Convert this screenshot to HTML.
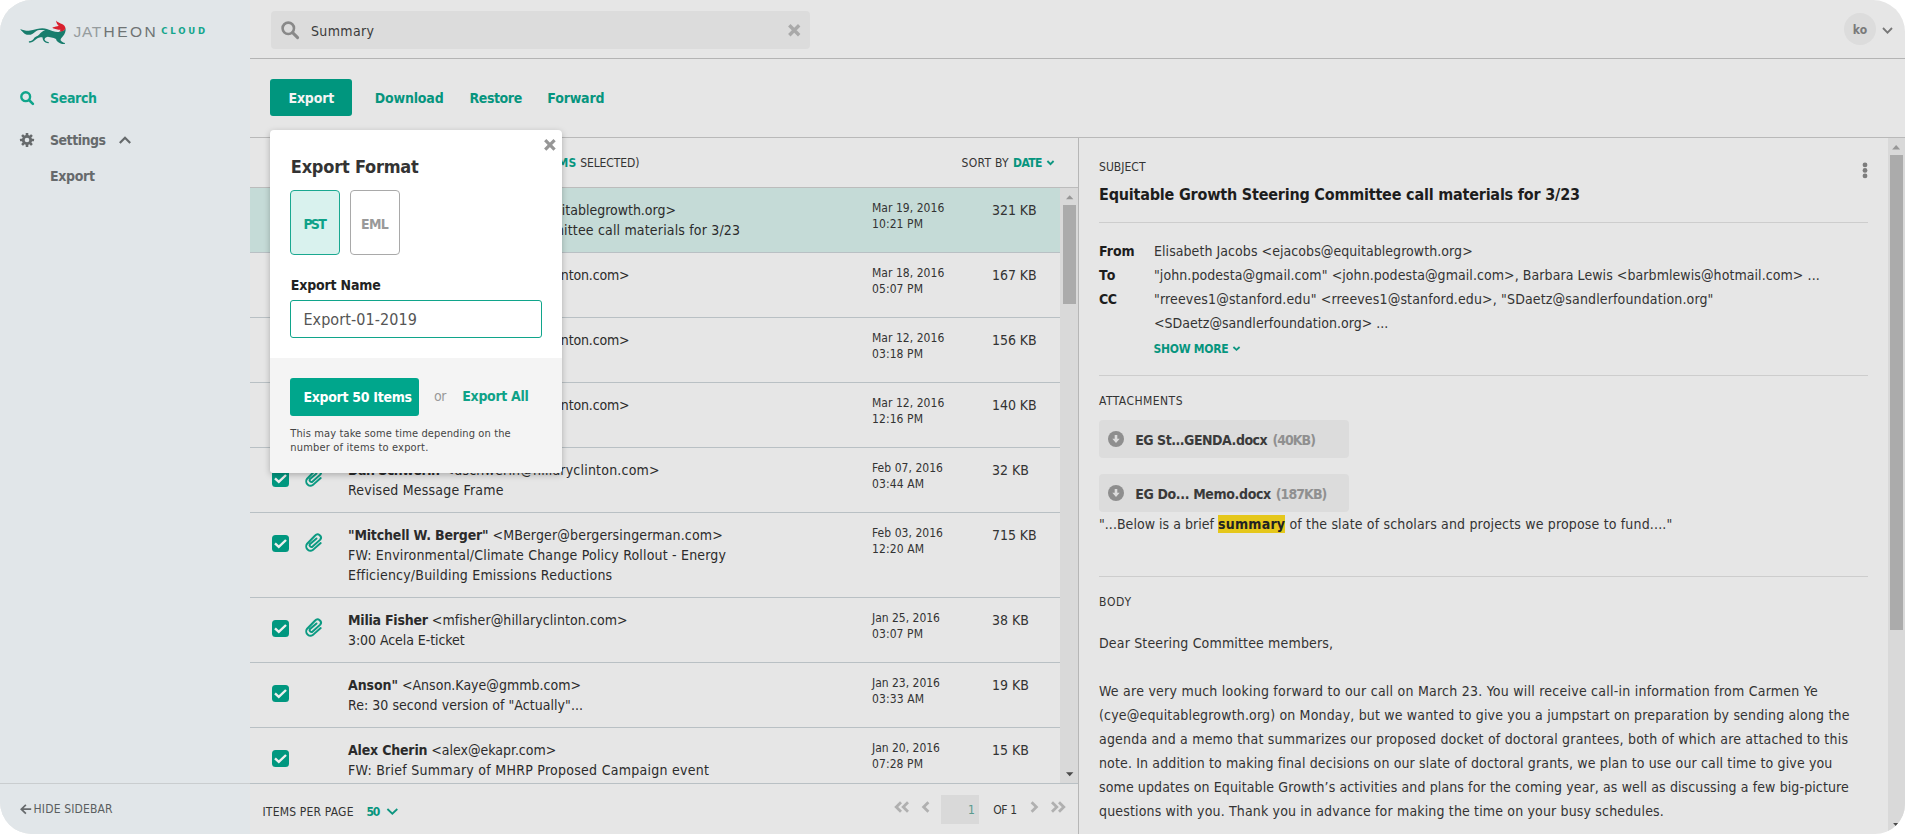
<!DOCTYPE html>
<html lang="en">
<head>
<meta charset="utf-8">
<title>Jatheon Cloud</title>
<style>
*{box-sizing:border-box;margin:0;padding:0}
html,body{width:1905px;height:834px;overflow:hidden;background:#fff}
body{font-family:"DejaVu Sans Condensed","Liberation Sans",sans-serif;font-size:14px;color:#2b2b2b;-webkit-font-smoothing:antialiased}
#app{position:absolute;left:0;top:0;width:1905px;height:834px;border-radius:32px 32px 30px 32px;overflow:hidden;background:#e6e6e6}
.abs{position:absolute}
.t{position:absolute;white-space:nowrap;line-height:20px}
b,.b{font-weight:bold}

svg{position:absolute;overflow:visible}
/* sidebar */
#sidebar{position:absolute;left:0;top:0;width:250px;height:834px;background:#e1e6e9}
#sbfoot{position:absolute;left:0;top:783px;width:250px;height:1px;background:#c9cdcf}
/* header */
#hline{position:absolute;left:250px;top:58px;width:1655px;height:1px;background:#b4b4b4}
#search{position:absolute;left:271px;top:11px;width:539px;height:38px;background:#dcdcdc;border-radius:4px}
#tline{position:absolute;left:250px;top:137px;width:1655px;height:1px;background:#b9b9b9}
#exportbtn{position:absolute;left:270px;top:79px;width:82px;height:37px;background:#00967e;border-radius:3px}

/* nav */
.nav{position:absolute;left:50px;white-space:nowrap;font-weight:bold;line-height:20px;font-size:14px}
#logo1{position:absolute;left:74.5px;top:22px;font-size:15.5px;line-height:20px;letter-spacing:2.6px;color:#6f7474;white-space:nowrap;font-family:"Liberation Sans",sans-serif}
#logo2{position:absolute;left:161.3px;top:21px;font-size:9.5px;line-height:20px;font-weight:bold;color:#12a58c;white-space:nowrap}
#hide{position:absolute;left:33.6px;top:801px;font-size:12px;line-height:16px;color:#5a5e60;white-space:nowrap}
#stext{position:absolute;left:311px;top:21px;line-height:20px;color:#3a3a3a;white-space:nowrap}
#avatar{position:absolute;left:1844px;top:13px;width:32px;height:32px;border-radius:50%;background:#dcdcdc;text-align:center;font-size:12px;font-weight:bold;line-height:34px;color:#7a7a7a}
.tb{position:absolute;top:88px;line-height:20px;font-weight:bold;white-space:nowrap;color:#06957e}

/* list */
#lhline{position:absolute;left:250px;top:187px;width:828px;height:1px;background:#bcbcbc}
#vline{position:absolute;left:1078px;top:138px;width:1px;height:696px;background:#b6b6b6}
#rows{position:absolute;left:250px;top:188px;width:810px;height:595px;overflow:hidden}
.row{position:relative;width:810px;border-bottom:1px solid #b9c0c4;padding:12px 0 12px 98px;min-height:65px}
.row.sel{background:#c5dbd7}
.row .l{line-height:20px;white-space:nowrap;height:20px}
.row .l span{display:inline-block;vertical-align:top}
.row .dt{position:absolute;left:622px;top:12px;font-size:12px;line-height:16px;white-space:nowrap;color:#333}
.row .dt span{display:block;height:16px}
.row .sz{position:absolute;left:742px;top:12px;line-height:20px;white-space:nowrap;color:#333}
.row .cb{left:22px;top:22px}
.row .pc{left:55px;top:19.5px}
#lsb{position:absolute;left:1060px;top:188px;width:18px;height:595px;background:#d9d9d9}
#lsb i{position:absolute;left:3px;top:17px;width:13px;height:99px;background:#ababab}
#lfline{position:absolute;left:250px;top:783px;width:828px;height:1px;background:#b9c0c4}
.s12{position:absolute;font-size:12px;line-height:16px;white-space:nowrap;color:#333}
#pgbox{position:absolute;left:941px;top:795px;width:38px;height:29px;background:#d9d9d9}
/* detail */
.hr{position:absolute;left:1099px;width:769px;height:1px;background:#cdcdcd}
.d14{position:absolute;font-size:14px;line-height:24px;white-space:nowrap;color:#333}
.att{position:absolute;left:1099px;width:250px;height:38px;background:#dcdcdc;border-radius:4px}
#rsb{position:absolute;left:1888px;top:138px;width:17px;height:696px;background:#d9d9d9}
#rsb i{position:absolute;left:2px;top:17px;width:13px;height:475px;background:#ababab}
mark{background:#e5c71b;color:#222;font-weight:bold;padding:1.4px 0 .7px}
.teal{color:#06957e}
/* popup */
#pop{position:absolute;left:270px;top:130px;width:292px;height:343px;background:#fff;border-radius:4px;box-shadow:0 2px 6px rgba(0,0,0,.25);overflow:hidden}
#popfoot{position:absolute;left:0;top:228px;width:292px;height:115px;background:#f4f4f4}
.pt{position:absolute;white-space:nowrap}
</style>
</head>
<body>
<div id="app">
  <div id="sidebar">
    <svg style="left:20px;top:20px" width="46" height="24" viewBox="0 0 46 24">
      <path d="M0.2 8.9 C3 10.2 6 10.8 8.7 10.7 C11.6 10.4 14.2 9.6 16.9 9.1 C18.8 8.6 20.6 8.2 22.3 8.2 C24 8.2 25.6 8.6 26.9 9.1 L32.4 11.1 C34.6 11.8 36.8 12.1 38.7 12 L44.2 10.2 L45.6 7.9 C45.8 9.6 45.6 11.2 45.1 12.5 C44.7 13.7 44.1 14.8 43.3 15.7 L41 18.4 C40.6 19 40.5 19.7 40.6 20.2 C41.6 21.6 43.2 22.6 45.1 23 L44.7 23.9 C43.2 24 41.8 23.8 40.6 23.4 C39.2 23 38.1 22.4 37.4 21.6 C36.7 20.8 36.2 19.9 36 18.9 C34.6 18.2 33 17.8 31.4 17.5 L27.8 16.8 C26.8 17 25.8 17.4 25.1 18 C24.7 18.6 24.5 19.2 24.6 19.8 C25 20.6 25.6 21.2 26.4 21.6 L28.9 22.3 L28.7 23.2 C27.5 23.2 26.4 23 25.5 22.5 C24.5 22 23.7 21.2 23.2 20.2 C22.8 19.4 22.6 18.5 22.6 17.5 C21.6 17.3 20.6 17.3 19.6 17.5 C18.4 17.8 17.3 18.3 16.4 18.9 L13.2 21.6 C12.1 22.3 10.9 22.7 9.6 22.8 L8.7 22.1 L9.1 21.2 C10.3 21.1 11.4 20.8 12.3 20.2 C13.2 19.4 14 18.5 14.6 17.5 C15.6 16.8 16.7 16.2 17.8 15.7 C18.8 14.9 19.7 14 20.5 13 C21.3 12.3 22.2 11.6 23.2 11.1 L25.1 10.2 C22.6 9.9 20.1 9.9 17.8 10.2 C16.8 10.7 15.9 11.3 15 12 C14.2 12.7 13.3 13.4 12.3 13.9 C11.2 14.5 10 14.8 8.7 14.8 C7.4 14.8 6.1 14.5 5 13.9 C3.9 13.3 3 12.5 2.3 11.6 C1.5 10.8 0.8 9.9 0.2 8.9 Z" fill="#187d6d"/>
      <path d="M36 0.2 C36.4 1.2 37 1.6 37.8 2 C38.7 2.6 39.6 3 40.6 3.4 C41.5 3.8 42.5 4.2 43.3 4.8 C44.1 5.4 44.8 6.1 45.1 7 C45.4 7.5 45.4 8 45.3 8.4 C45.2 9.2 44.8 9.8 44.2 10.2 C43.2 10.9 41.9 11.4 40.6 11.6 L39.2 11.6 C39.8 11.1 40.3 10.5 40.6 9.8 C39.5 9.9 38.4 9.8 37.4 9.5 C36.1 9.4 34.8 9.1 33.7 8.6 C33.1 8.4 32.7 8 32.4 7.5 C33.6 7.3 34.8 7 36 6.6 C37 6.4 37.9 6.1 38.7 5.7 C37.9 5 37.3 4.2 36.9 3.4 C36.4 2.4 36.1 1.3 36 0.2 Z" fill="#d9202e"/>
    </svg>
    <div id="logo1"><span style="letter-spacing:0.647px;color:#969c9e;position:absolute;left:-1px;top:0">JAT</span><span style="letter-spacing:2.501px;position:absolute;left:29px;top:0">HEON</span></div>
    <div id="logo2" style="letter-spacing:2.753px">CLOUD</div>
    <svg style="left:20px;top:91px" width="14" height="14" viewBox="0 0 14 14"><circle cx="5.7" cy="5.7" r="4.4" fill="none" stroke="#10a58b" stroke-width="2.4"/><path d="M9 9 L12.9 12.9" stroke="#10a58b" stroke-width="2.6" stroke-linecap="round"/></svg>
    <div class="nav" style="letter-spacing:-0.353px;top:88px;color:#0d9f88">Search</div>
    <svg style="left:20px;top:133px" width="14" height="14" viewBox="0 0 14 14"><g fill="#666a6c"><circle cx="7" cy="7" r="5.1"/><rect x="5.7" y="0" width="2.6" height="14" rx=".5"/><rect x="5.7" y="0" width="2.6" height="14" rx=".5" transform="rotate(45 7 7)"/><rect x="5.7" y="0" width="2.6" height="14" rx=".5" transform="rotate(90 7 7)"/><rect x="5.7" y="0" width="2.6" height="14" rx=".5" transform="rotate(135 7 7)"/></g><circle cx="7" cy="7" r="2.3" fill="#e1e6e9"/></svg>
    <div class="nav" style="letter-spacing:-0.496px;top:130px;color:#666a6c">Settings</div>
    <svg style="left:119px;top:136px" width="12" height="8" viewBox="0 0 12 8"><path d="M0.8 7 L6 1.7 L11.2 7" fill="none" stroke="#666a6c" stroke-width="2.2"/></svg>
    <div class="nav" style="letter-spacing:-0.328px;top:166px;color:#666a6c">Export</div>
    <svg style="left:19.7px;top:803.5px" width="11.2" height="10.4" viewBox="0 0 11.2 10.4"><path d="M5.9 0.8 L1.3 5.2 L5.9 9.6 M1.3 5.2 H11.2" fill="none" stroke="#666a6c" stroke-width="1.7"/></svg>
    <div id="hide" style="letter-spacing:0.152px">HIDE SIDEBAR</div>
    <div id="sbfoot"></div>
  </div>
  <div id="hline"></div>

  <div id="search">
    <svg style="left:10px;top:10px" width="18" height="18" viewBox="0 0 18 18"><circle cx="7.3" cy="7.3" r="5.7" fill="none" stroke="#898989" stroke-width="2.6"/><path d="M11.6 11.6 L16.6 16.6" stroke="#898989" stroke-width="3" stroke-linecap="round"/></svg>
    <svg style="left:516.6px;top:12.8px" width="12.5" height="12.5" viewBox="0 0 12.5 12.5"><path d="M1.3 1.3 L11.2 11.2 M11.2 1.3 L1.3 11.2" stroke="#a9a9a9" stroke-width="3.4"/></svg>
  </div>
  <div id="stext" style="letter-spacing:0.354px">Summary</div>
  <div id="avatar">ko</div>
  <svg style="left:1882px;top:27px" width="11" height="7" viewBox="0 0 11 7"><path d="M1 1 L5.5 5.6 L10 1" fill="none" stroke="#777" stroke-width="1.8"/></svg>
  <div id="tline"></div>
  <div id="exportbtn"></div>
  <div class="tb" style="letter-spacing:-0.188px;left:288.5px;color:#f4f4f4">Export</div>
  <div class="tb" style="letter-spacing:-0.172px;left:374.7px">Download</div>
  <div class="tb" style="letter-spacing:-0.415px;left:469.5px">Restore</div>
  <div class="tb" style="letter-spacing:-0.180px;left:547.3px">Forward</div>

  <div class="s12" style="letter-spacing:0.280px;left:300px;top:155px">SELECT ALL</div>
  <div class="s12" style="left:514px;top:155px">(<b class="teal" style="letter-spacing:0.303px">50 ITEMS</b> <span style="letter-spacing:-0.093px">SELECTED)</span></div>
  <div class="s12" style="letter-spacing:0.276px;left:961.6px;top:155px">SORT BY</div>
  <div class="s12 b teal" style="letter-spacing:-0.547px;left:1013px;top:155px">DATE</div>
  <svg style="left:1046.5px;top:160px" width="7" height="5.5" viewBox="0 0 7 5.5"><path d="M0.4 1 L3.5 4.2 L6.6 1" fill="none" stroke="#0e9680" stroke-width="1.8"/></svg>
  <div id="lhline"></div>
  <div id="rows">
<div class="row sel"><svg class="cb" width="17" height="17" viewBox="0 0 17 17"><rect width="17" height="17" rx="3.5" fill="#00977f"/><path d="M3 8.4 L6.8 11.9 L14 5" fill="none" stroke="#efefef" stroke-width="2.4"/></svg><svg class="pc" width="17" height="19" viewBox="0 0 17 19"><path d="M15.7 10.1 L8.83 16.12 A4.3 4.3 0 0 1 2.17 10.68 L10.15 2.51 A3.3 3.3 0 0 1 15.25 6.69 L7.6 13.4 A1.8 1.8 0 0 1 4.8 11.2 L11.5 5.5" fill="none" stroke="#0b9a82" stroke-width="2" stroke-linecap="round"/></svg><div class="l"><b style="letter-spacing:-0.066px">Elisabeth Jacobs</b> <span style="letter-spacing:-0.013px">&lt;ejacobs@equitablegrowth.org&gt;</span></div><div class="l"><span style="letter-spacing:0.168px">Equitable Growth Steering Committee call materials for 3/23</span></div><div class="dt"><span style="letter-spacing:0.040px">Mar 19, 2016</span><span style="letter-spacing:0.089px">10:21 PM</span></div><div class="sz" style="letter-spacing:-0.067px">321 KB</div></div>
<div class="row"><svg class="cb" width="17" height="17" viewBox="0 0 17 17"><rect width="17" height="17" rx="3.5" fill="#00977f"/><path d="M3 8.4 L6.8 11.9 L14 5" fill="none" stroke="#efefef" stroke-width="2.4"/></svg><svg class="pc" width="17" height="19" viewBox="0 0 17 19"><path d="M15.7 10.1 L8.83 16.12 A4.3 4.3 0 0 1 2.17 10.68 L10.15 2.51 A3.3 3.3 0 0 1 15.25 6.69 L7.6 13.4 A1.8 1.8 0 0 1 4.8 11.2 L11.5 5.5" fill="none" stroke="#0b9a82" stroke-width="2" stroke-linecap="round"/></svg><div class="l"><b style="letter-spacing:-0.912px">Huma Abedin</b> <span style="letter-spacing:-0.163px">&lt;habedin@hillaryclinton.com&gt;</span></div><div class="l"><span style="letter-spacing:0.270px">Re: Draft</span></div><div class="dt"><span style="letter-spacing:0.040px">Mar 18, 2016</span><span style="letter-spacing:0.089px">05:07 PM</span></div><div class="sz" style="letter-spacing:-0.067px">167 KB</div></div>
<div class="row"><svg class="cb" width="17" height="17" viewBox="0 0 17 17"><rect width="17" height="17" rx="3.5" fill="#00977f"/><path d="M3 8.4 L6.8 11.9 L14 5" fill="none" stroke="#efefef" stroke-width="2.4"/></svg><svg class="pc" width="17" height="19" viewBox="0 0 17 19"><path d="M15.7 10.1 L8.83 16.12 A4.3 4.3 0 0 1 2.17 10.68 L10.15 2.51 A3.3 3.3 0 0 1 15.25 6.69 L7.6 13.4 A1.8 1.8 0 0 1 4.8 11.2 L11.5 5.5" fill="none" stroke="#0b9a82" stroke-width="2" stroke-linecap="round"/></svg><div class="l"><b style="letter-spacing:-0.912px">Huma Abedin</b> <span style="letter-spacing:-0.163px">&lt;habedin@hillaryclinton.com&gt;</span></div><div class="l"><span style="letter-spacing:0.270px">Re: Draft</span></div><div class="dt"><span style="letter-spacing:0.040px">Mar 12, 2016</span><span style="letter-spacing:0.089px">03:18 PM</span></div><div class="sz" style="letter-spacing:-0.067px">156 KB</div></div>
<div class="row"><svg class="cb" width="17" height="17" viewBox="0 0 17 17"><rect width="17" height="17" rx="3.5" fill="#00977f"/><path d="M3 8.4 L6.8 11.9 L14 5" fill="none" stroke="#efefef" stroke-width="2.4"/></svg><svg class="pc" width="17" height="19" viewBox="0 0 17 19"><path d="M15.7 10.1 L8.83 16.12 A4.3 4.3 0 0 1 2.17 10.68 L10.15 2.51 A3.3 3.3 0 0 1 15.25 6.69 L7.6 13.4 A1.8 1.8 0 0 1 4.8 11.2 L11.5 5.5" fill="none" stroke="#0b9a82" stroke-width="2" stroke-linecap="round"/></svg><div class="l"><b style="letter-spacing:-0.912px">Huma Abedin</b> <span style="letter-spacing:-0.163px">&lt;habedin@hillaryclinton.com&gt;</span></div><div class="l"><span style="letter-spacing:0.270px">Re: Draft</span></div><div class="dt"><span style="letter-spacing:0.040px">Mar 12, 2016</span><span style="letter-spacing:0.089px">12:16 PM</span></div><div class="sz" style="letter-spacing:-0.067px">140 KB</div></div>
<div class="row"><svg class="cb" width="17" height="17" viewBox="0 0 17 17"><rect width="17" height="17" rx="3.5" fill="#00977f"/><path d="M3 8.4 L6.8 11.9 L14 5" fill="none" stroke="#efefef" stroke-width="2.4"/></svg><svg class="pc" width="17" height="19" viewBox="0 0 17 19"><path d="M15.7 10.1 L8.83 16.12 A4.3 4.3 0 0 1 2.17 10.68 L10.15 2.51 A3.3 3.3 0 0 1 15.25 6.69 L7.6 13.4 A1.8 1.8 0 0 1 4.8 11.2 L11.5 5.5" fill="none" stroke="#0b9a82" stroke-width="2" stroke-linecap="round"/></svg><div class="l"><b style="letter-spacing:-0.500px">Dan Schwerin</b> <span style="letter-spacing:0.205px">&lt;dschwerin@hillaryclinton.com&gt;</span></div><div class="l"><span style="letter-spacing:0.200px">Revised Message Frame</span></div><div class="dt"><span style="letter-spacing:0.041px">Feb 07, 2016</span><span style="letter-spacing:0.109px">03:44 AM</span></div><div class="sz" style="letter-spacing:0.020px">32 KB</div></div>
<div class="row"><svg class="cb" width="17" height="17" viewBox="0 0 17 17"><rect width="17" height="17" rx="3.5" fill="#00977f"/><path d="M3 8.4 L6.8 11.9 L14 5" fill="none" stroke="#efefef" stroke-width="2.4"/></svg><svg class="pc" width="17" height="19" viewBox="0 0 17 19"><path d="M15.7 10.1 L8.83 16.12 A4.3 4.3 0 0 1 2.17 10.68 L10.15 2.51 A3.3 3.3 0 0 1 15.25 6.69 L7.6 13.4 A1.8 1.8 0 0 1 4.8 11.2 L11.5 5.5" fill="none" stroke="#0b9a82" stroke-width="2" stroke-linecap="round"/></svg><div class="l"><b style="letter-spacing:-0.181px">"Mitchell W. Berger"</b> <span style="letter-spacing:0.155px">&lt;MBerger@bergersingerman.com&gt;</span></div><div class="l"><span style="letter-spacing:0.183px">FW: Environmental/Climate Change Policy Rollout - Energy</span></div><div class="l"><span style="letter-spacing:0.202px">Efficiency/Building Emissions Reductions</span></div><div class="dt"><span style="letter-spacing:0.041px">Feb 03, 2016</span><span style="letter-spacing:0.109px">12:20 AM</span></div><div class="sz" style="letter-spacing:-0.067px">715 KB</div></div>
<div class="row"><svg class="cb" width="17" height="17" viewBox="0 0 17 17"><rect width="17" height="17" rx="3.5" fill="#00977f"/><path d="M3 8.4 L6.8 11.9 L14 5" fill="none" stroke="#efefef" stroke-width="2.4"/></svg><svg class="pc" width="17" height="19" viewBox="0 0 17 19"><path d="M15.7 10.1 L8.83 16.12 A4.3 4.3 0 0 1 2.17 10.68 L10.15 2.51 A3.3 3.3 0 0 1 15.25 6.69 L7.6 13.4 A1.8 1.8 0 0 1 4.8 11.2 L11.5 5.5" fill="none" stroke="#0b9a82" stroke-width="2" stroke-linecap="round"/></svg><div class="l"><b style="letter-spacing:-0.229px">Milia Fisher</b> <span style="letter-spacing:0.081px">&lt;mfisher@hillaryclinton.com&gt;</span></div><div class="l"><span style="letter-spacing:-0.066px">3:00 Acela E-ticket</span></div><div class="dt"><span style="letter-spacing:-0.013px">Jan 25, 2016</span><span style="letter-spacing:0.089px">03:07 PM</span></div><div class="sz" style="letter-spacing:0.020px">38 KB</div></div>
<div class="row"><svg class="cb" width="17" height="17" viewBox="0 0 17 17"><rect width="17" height="17" rx="3.5" fill="#00977f"/><path d="M3 8.4 L6.8 11.9 L14 5" fill="none" stroke="#efefef" stroke-width="2.4"/></svg><div class="l"><b style="letter-spacing:-0.081px">Anson"</b> <span style="letter-spacing:0.007px">&lt;Anson.Kaye@gmmb.com&gt;</span></div><div class="l"><span style="letter-spacing:0.046px">Re: 30 second version of "Actually"...</span></div><div class="dt"><span style="letter-spacing:-0.013px">Jan 23, 2016</span><span style="letter-spacing:0.109px">03:33 AM</span></div><div class="sz" style="letter-spacing:0.020px">19 KB</div></div>
<div class="row"><svg class="cb" width="17" height="17" viewBox="0 0 17 17"><rect width="17" height="17" rx="3.5" fill="#00977f"/><path d="M3 8.4 L6.8 11.9 L14 5" fill="none" stroke="#efefef" stroke-width="2.4"/></svg><div class="l"><b style="letter-spacing:-0.188px">Alex Cherin</b> <span style="letter-spacing:-0.013px">&lt;alex@ekapr.com&gt;</span></div><div class="l"><span style="letter-spacing:0.269px">FW: Brief Summary of MHRP Proposed Campaign event</span></div><div class="dt"><span style="letter-spacing:-0.013px">Jan 20, 2016</span><span style="letter-spacing:0.089px">07:28 PM</span></div><div class="sz" style="letter-spacing:0.020px">15 KB</div></div>
  </div>
  <div id="lsb"><i></i>
    <svg style="left:6px;top:6.5px" width="7.4" height="4.4" viewBox="0 0 8 4.4"><path d="M0 4.4 L4 0 L8 4.4 Z" fill="#979797"/></svg>
    <svg style="left:6px;top:583.5px" width="7.4" height="4.4" viewBox="0 0 8 4.4"><path d="M0 0 L4 4.4 L8 0 Z" fill="#4a4a4a"/></svg>
  </div>
  <div id="lfline"></div>
  <div class="s12" style="letter-spacing:0.188px;left:262.5px;top:804px">ITEMS PER PAGE</div>
  <div class="s12 b teal" style="letter-spacing:-1.031px;left:366.4px;top:804px">50</div>
  <svg style="left:387.3px;top:807.5px" width="10.7" height="7" viewBox="0 0 10.7 7"><path d="M0.4 1 L5.35 5.7 L10.299999999999999 1" fill="none" stroke="#0e9680" stroke-width="1.8"/></svg>
  <svg style="left:894px;top:801.3px" width="16" height="12" viewBox="0 0 16 12"><path d="M7 1.2 L2.2 6 L7 10.8 M14 1.2 L9.2 6 L14 10.8" fill="none" stroke="#b0b0b0" stroke-width="2.8"/></svg>
  <svg style="left:920.6px;top:801.3px" width="9" height="12" viewBox="0 0 9 12"><path d="M7.4 1.2 L2.6 6 L7.4 10.8" fill="none" stroke="#b0b0b0" stroke-width="2.8"/></svg>
  <div id="pgbox"></div>
  <div class="s12" style="left:968px;top:801.5px;color:#5a9a8d">1</div>
  <div class="s12" style="letter-spacing:-0.339px;left:993.2px;top:801.5px">OF 1</div>
  <svg style="left:1029.7px;top:801.3px" width="9" height="12" viewBox="0 0 9 12"><path d="M1.6 1.2 L6.4 6 L1.6 10.8" fill="none" stroke="#b0b0b0" stroke-width="2.8"/></svg>
  <svg style="left:1049.6px;top:801.3px" width="16" height="12" viewBox="0 0 16 12"><path d="M2 1.2 L6.8 6 L2 10.8 M9 1.2 L13.8 6 L9 10.8" fill="none" stroke="#b0b0b0" stroke-width="2.8"/></svg>
  <div id="vline"></div>

  <div class="s12" style="letter-spacing:0.031px;left:1099px;top:159px">SUBJECT</div>
  <div class="pt b" style="letter-spacing:-0.199px;left:1099px;top:183px;font-size:16px;line-height:24px;color:#1d1d1d">Equitable Growth Steering Committee call materials for 3/23</div>
  <svg style="left:1862px;top:161.5px" width="6" height="17" viewBox="0 0 6 17"><g fill="#7d7d7d"><circle cx="3" cy="2.9" r="2.4"/><circle cx="3" cy="8.4" r="2.4"/><circle cx="3" cy="13.9" r="2.4"/></g></svg>
  <div class="hr" style="top:222px"></div>
  <div class="d14 b" style="letter-spacing:-0.006px;left:1099px;top:239px;color:#1d1d1d">From</div>
  <div class="d14" style="letter-spacing:0.061px;left:1154px;top:239px">Elisabeth Jacobs &lt;ejacobs@equitablegrowth.org&gt;</div>
  <div class="d14 b" style="letter-spacing:1.109px;left:1099px;top:263px;color:#1d1d1d">To</div>
  <div class="d14" style="letter-spacing:0.069px;left:1154px;top:263px">"john.podesta@gmail.com" &lt;john.podesta@gmail.com&gt;, Barbara Lewis &lt;barbmlewis@hotmail.com&gt; ...</div>
  <div class="d14 b" style="letter-spacing:-0.484px;left:1099px;top:287px;color:#1d1d1d">CC</div>
  <div class="d14" style="letter-spacing:0.144px;left:1154px;top:287px">"rreeves1@stanford.edu" &lt;rreeves1@stanford.edu&gt;, "SDaetz@sandlerfoundation.org"</div>
  <div class="d14" style="letter-spacing:0.019px;left:1154px;top:311px">&lt;SDaetz@sandlerfoundation.org&gt; ...</div>
  <div class="s12 b teal" style="letter-spacing:-0.285px;left:1153.6px;top:341px">SHOW MORE</div>
  <svg style="left:1233px;top:345.9px" width="7" height="5.2" viewBox="0 0 7 5.2"><path d="M0.4 1 L3.5 3.9000000000000004 L6.6 1" fill="none" stroke="#0e9680" stroke-width="1.8"/></svg>
  <div class="hr" style="top:375px"></div>
  <div class="s12" style="letter-spacing:0.452px;left:1099px;top:393px">ATTACHMENTS</div>
  <div class="att" style="top:420px"></div>
  <svg style="left:1108.4px;top:430.8px" width="16" height="16" viewBox="0 0 16 16"><circle cx="8" cy="8" r="8" fill="#8e8e8e"/><path d="M6.7 4 H9.3 V7.8 H11.7 L8 11.9 L4.3 7.8 H6.7 Z" fill="#dcdcdc"/></svg>
  <div class="d14 b" style="letter-spacing:-0.486px;left:1135.2px;top:428px;color:#3a3a3a">EG St...GENDA.docx</div>
  <div class="d14 b" style="letter-spacing:-0.981px;left:1272.5px;top:428px;color:#909090">(40KB)</div>
  <div class="att" style="top:474px"></div>
  <svg style="left:1108.4px;top:484.8px" width="16" height="16" viewBox="0 0 16 16"><circle cx="8" cy="8" r="8" fill="#8e8e8e"/><path d="M6.7 4 H9.3 V7.8 H11.7 L8 11.9 L4.3 7.8 H6.7 Z" fill="#dcdcdc"/></svg>
  <div class="d14 b" style="letter-spacing:-0.358px;left:1135.2px;top:482px;color:#3a3a3a">EG Do... Memo.docx</div>
  <div class="d14 b" style="letter-spacing:-0.912px;left:1275.7px;top:482px;color:#909090">(187KB)</div>
  <div class="d14" style="left:1099px;top:512px"><span style="letter-spacing:0.034px">"...Below is a brief </span><mark style="letter-spacing:0.227px">summary</mark><span style="letter-spacing:0.165px"> of the slate of scholars and projects we propose to fund...."</span></div>
  <div class="hr" style="top:576px"></div>
  <div class="s12" style="letter-spacing:0.682px;left:1099px;top:594px">BODY</div>
  <div class="d14" style="letter-spacing:0.157px;left:1099px;top:631px">Dear Steering Committee members,</div>
  <div class="d14" style="letter-spacing:0.239px;left:1099px;top:679px">We are very much looking forward to our call on March 23. You will receive call-in information from Carmen Ye</div>
  <div class="d14" style="letter-spacing:0.166px;left:1099px;top:703px">(cye@equitablegrowth.org) on Monday, but we wanted to give you a jumpstart on preparation by sending along the</div>
  <div class="d14" style="letter-spacing:0.200px;left:1099px;top:727px">agenda and a memo that summarizes our proposed docket of doctoral grantees, both of which are attached to this</div>
  <div class="d14" style="letter-spacing:0.139px;left:1099px;top:751px">note. In addition to making final decisions on our slate of doctoral grants, we plan to use our call time to give you</div>
  <div class="d14" style="letter-spacing:0.116px;left:1099px;top:775px">some updates on Equitable Growth’s activities and plans for the coming year, as well as discussing a few big-picture</div>
  <div class="d14" style="letter-spacing:0.155px;left:1099px;top:799px">questions with you. Thank you in advance for making the time on your busy schedules.</div>
  <div id="rsb"><i></i>
    <svg style="left:4.3px;top:7px" width="8.3" height="4.4" viewBox="0 0 8 4.4"><path d="M0 4.4 L4 0 L8 4.4 Z" fill="#979797"/></svg>
    <svg style="left:5.4px;top:685px" width="6" height="3.2" viewBox="0 0 8 4.4"><path d="M0 0 L4 4.4 L8 0 Z" fill="#4a4a4a"/></svg>
  </div>

  <div id="pop">
    <svg style="left:274.2px;top:8.9px" width="11.8" height="11.8" viewBox="0 0 11.8 11.8"><path d="M1.2 1.2 L10.6 10.6 M10.6 1.2 L1.2 10.6" stroke="#969696" stroke-width="3.2"/></svg>
    <div class="pt b" style="letter-spacing:-0.216px;left:20.8px;top:25px;font-size:18px;line-height:24px;color:#333">Export Format</div>
    <div class="abs" style="left:20px;top:60px;width:50px;height:65px;border:1px solid #1aa890;background:#d9f2ee;border-radius:4px"></div>
    <div class="pt b" style="letter-spacing:-1.753px;left:33.4px;top:84px;line-height:20px;color:#0fa288">PST</div>
    <div class="abs" style="left:80px;top:60px;width:50px;height:65px;border:1px solid #a9a9a9;background:#fff;border-radius:4px"></div>
    <div class="pt b" style="letter-spacing:-0.686px;left:91px;top:84px;line-height:20px;color:#999">EML</div>
    <div class="pt b" style="letter-spacing:-0.173px;left:20.8px;top:145px;line-height:20px;color:#222">Export Name</div>
    <div class="abs" style="left:20px;top:170px;width:252px;height:38px;border:1px solid #10a58b;background:#fff;border-radius:3px"></div>
    <div class="pt" style="letter-spacing:0.074px;left:33.4px;top:178px;font-size:16px;line-height:24px;color:#555">Export-01-2019</div>
    <div id="popfoot"></div>
    <div class="abs" style="left:20px;top:248px;width:129px;height:38px;background:#00a68c;border-radius:3px"></div>
    <div class="pt b" style="letter-spacing:-0.301px;left:33.4px;top:257px;line-height:20px;color:#fff">Export 50 Items</div>
    <div class="pt" style="letter-spacing:-0.291px;left:163.9px;top:256px;line-height:20px;color:#999">or</div>
    <div class="pt b" style="letter-spacing:-0.323px;left:192.3px;top:256px;line-height:20px;color:#0fa288">Export All</div>
    <div class="pt" style="letter-spacing:0.122px;left:20.3px;top:297px;font-size:11px;line-height:14px;color:#444">This may take some time depending on the</div>
    <div class="pt" style="letter-spacing:0.186px;left:20.3px;top:311px;font-size:11px;line-height:14px;color:#444">number of items to export.</div>
  </div>
</div>
</body>
</html>
